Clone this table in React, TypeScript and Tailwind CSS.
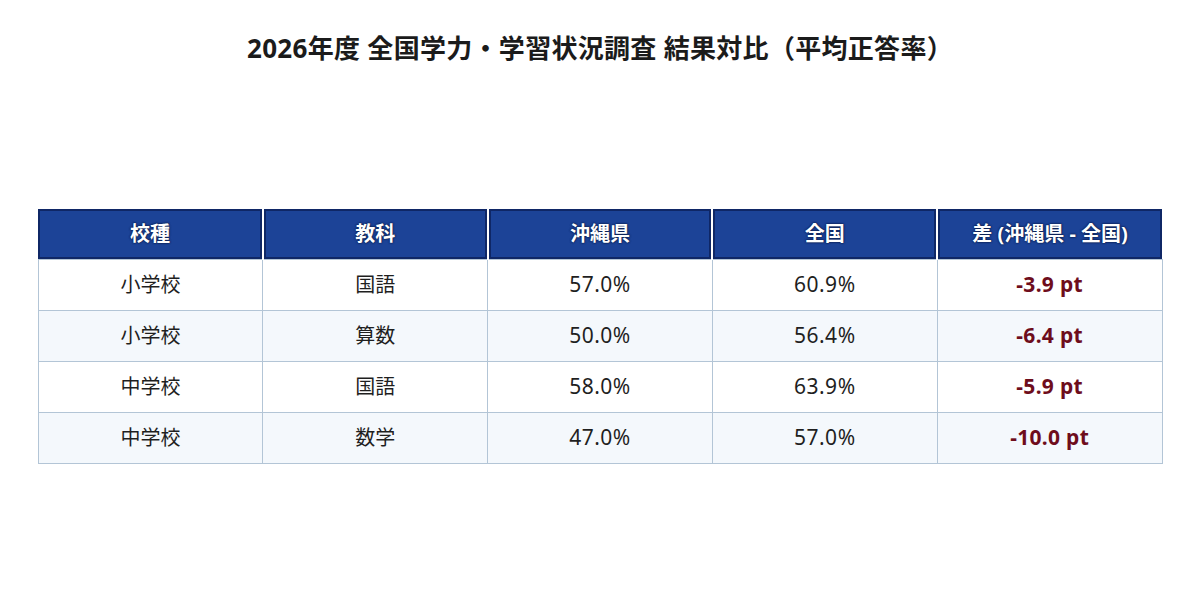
const rows = [
  { school: "小学校", subject: "国語", okinawa: "57.0%", national: "60.9%", diff: "-3.9 pt" },
  { school: "小学校", subject: "算数", okinawa: "50.0%", national: "56.4%", diff: "-6.4 pt" },
  { school: "中学校", subject: "国語", okinawa: "58.0%", national: "63.9%", diff: "-5.9 pt" },
  { school: "中学校", subject: "数学", okinawa: "47.0%", national: "57.0%", diff: "-10.0 pt" },
];

const headers = ["校種", "教科", "沖縄県", "全国", "差 (沖縄県 - 全国)"];

export default function App() {
  return (
    <div
      className="w-[1200px] h-[615px] bg-white flex flex-col items-center"
      style={{ fontFamily: '"Noto Sans", "Noto Sans CJK JP", sans-serif' }}
    >
      <h1 className="mt-[29px] text-[26px] leading-[38px] font-bold text-[#1b1b1b] tracking-[0.3px]">
        2026年度 全国学力・学習状況調査 結果対比（平均正答率）
      </h1>

      <table className="mt-[142px] w-[1125px] border-collapse table-fixed">
        <thead>
          <tr>
            {headers.map((h) => (
              <th
                key={h}
                className="h-[50px] bg-[#1c4397] border-x-2 border-white p-0 first:border-l-0 last:border-r-0"
              >
                <div className="h-full flex items-center justify-center border-2 border-[#0f2766] text-white text-[20px] font-bold [text-shadow:0_0_2px_#0a1a45,0_0_2px_#0a1a45]">
                  {h}
                </div>
              </th>
            ))}
          </tr>
        </thead>
        <tbody>
          {rows.map((r, i) => (
            <tr key={i} className={i % 2 === 1 ? "bg-[#f4f8fc]" : "bg-white"}>
              <td className="h-[51px] border border-[#b3c5d6] text-center text-[20px] text-[#1f1f1f]">{r.school}</td>
              <td className="border border-[#b3c5d6] text-center text-[20px] text-[#1f1f1f]">{r.subject}</td>
              <td className="border border-[#b3c5d6] text-center text-[21px] text-[#1f1f1f] tracking-[0.5px]">{r.okinawa}</td>
              <td className="border border-[#b3c5d6] text-center text-[21px] text-[#1f1f1f] tracking-[0.5px]">{r.national}</td>
              <td className="border border-[#b3c5d6] text-center text-[21px] font-bold text-[#6e0d1c] tracking-[0.3px]">{r.diff}</td>
            </tr>
          ))}
        </tbody>
      </table>
    </div>
  );
}
